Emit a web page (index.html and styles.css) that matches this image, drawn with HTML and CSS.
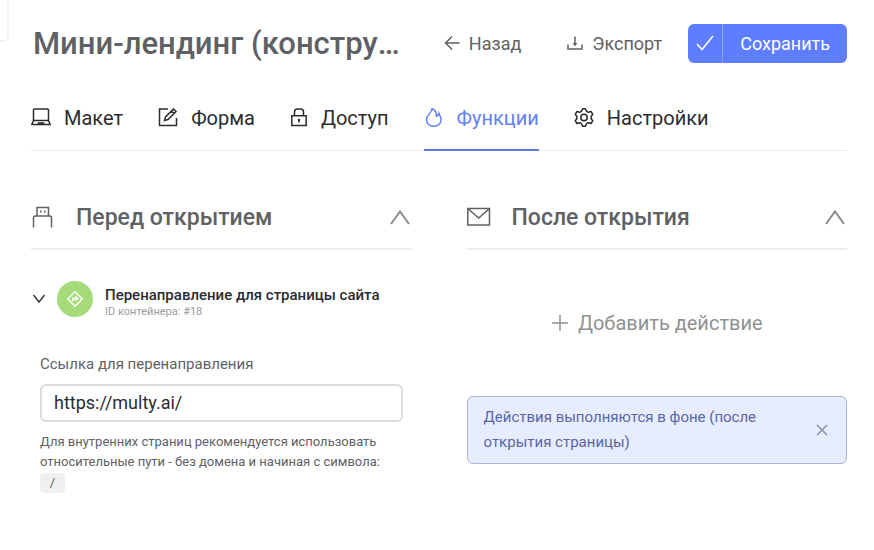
FILE: index.html
```html
<!DOCTYPE html>
<html lang="ru">
<head>
    <meta charset="UTF-8">
    <meta name="viewport" content="width=device-width, initial-scale=1">
    <title>Мини-лендинг (конструктор)</title>
    <link rel="stylesheet" href="styles.css">
</head>
<body>
    <div class="drawer-edge"></div>
    <main class="page">
        <header class="header">
            <h1>Мини-лендинг (конструктор)</h1>
            <div class="actions">
                <button type="button" class="btn-text">
                    <svg width="16" height="16" viewBox="0 0 16 16"><path d="M15.500 8H1.500M8 1.500L1.500 8L8 14.500"/></svg>
                    Назад
                </button>
                <button type="button" class="btn-text btn-export">
                    <svg width="16" height="16" viewBox="0 0 16 16"><path d="M1 9.500V14H15V9.500M8 1.500V10.500"/><path class="fill" d="M5.500 8H10.500L8 11Z"/></svg>
                    Экспорт
                </button>
                <button type="button" class="btn-save">
                    <span class="btn-save-icon">
                        <svg width="18" height="18" viewBox="0 0 18 18"><path d="M1 10L6 15.500L17 2"/></svg>
                    </span>
                    <span class="btn-save-text">Сохранить</span>
                </button>
            </div>
        </header>

        <nav class="tabs">
            <a href="#layout" class="tab">
                <svg width="20" height="20" viewBox="0 0 20 20"><path d="M2.500 12.500V1.800Q2.500 1 3.300 1H16.700Q17.500 1 17.500 1.800V12.500M2.500 12.500H17.500L19.200 16.500H0.800ZM7 16.500L7.500 15H12.500L13 16.500"/></svg>
                Макет
            </a>
            <a href="#form" class="tab">
                <svg width="20" height="20" viewBox="0 0 20 20"><path d="M10 1H1.500V17.500H18.500V10M6.500 12.500L7.500 9L15.500 1L18 3.500L10 11.500ZM13.500 3L16 5.500"/></svg>
                Форма
            </a>
            <a href="#access" class="tab">
                <svg width="18" height="20" viewBox="0 0 18 20"><path d="M1.800 7.800H16.200V17.500H1.800ZM4.500 7.800V4Q4.500 1 7.500 1H10.500Q13.500 1 13.500 4V7.800M9 11.500V14.500"/><circle class="fill" cx="9" cy="12" r="1.200"/></svg>
                Доступ
            </a>
            <a href="#functions" class="tab active">
                <svg width="20" height="20" viewBox="0 0 20 20"><path d="M8 0.500C8.200 4.500 2.500 6.800 2.500 11.500C2.500 15.500 5.500 18.200 9.700 18.200C14 18.200 17 15.500 17 11.500C17 9 15.700 7.600 15 5.500C14.700 7 13.700 7.800 12.500 8.300C12.700 4.800 11.200 2 8 0.500Z"/></svg>
                Функции
            </a>
            <a href="#settings" class="tab">
                <svg width="20" height="20" viewBox="0 0 20 20"><path d="M8.500 0.800H11.500L12.500 3.300L14.400 4.300L17 3.500L18.800 6.300L17.200 8.300V10.700L18.800 12.700L17 15.500L14.400 14.700L12.500 15.700L11.500 18.300H8.500L7.500 15.700L5.600 14.700L3 15.500L1.200 12.700L2.800 10.700V8.300L1.200 6.300L3 3.500L5.600 4.300L7.500 3.300Z" stroke-linejoin="round"/><circle cx="10" cy="9.500" r="3.200"/></svg>
                Настройки
            </a>
        </nav>

        <div class="columns">
            <section>
                <div class="section-head">
                    <svg width="24" height="24" viewBox="0 0 24 24"><path d="M2.500 21.500V12Q2.500 10 4.500 10H18.500Q20.500 10 20.500 12V21.500M6 10V1.500H17.500V10"/><path class="fill" d="M9 4.500H10.500V6.500H9ZM13 4.500H14.500V6.500H13Z"/></svg>
                    <h2>Перед открытием</h2>
                    <button type="button" class="toggle" aria-label="Свернуть">
                        <svg width="22" height="16" viewBox="0 0 22 16"><path d="M2 14L11 1.500L20 14"/></svg>
                    </button>
                </div>

                <div class="item">
                    <button type="button" class="item-toggle" aria-label="Развернуть">
                        <svg width="14" height="10" viewBox="0 0 14 10"><path d="M1.500 1L7 8L12.500 1"/></svg>
                    </button>
                    <span class="item-icon">
                        <svg width="18" height="18" viewBox="0 0 18 18"><path d="M9 1.800L16.200 9L9 16.200L1.800 9ZM7 11.500V8.500H11M9.500 6.500L11.500 8.500L9.500 10.500"/></svg>
                    </span>
                    <div>
                        <div class="item-title">Перенаправление для страницы сайта</div>
                        <div class="item-id">ID контейнера: #18</div>
                    </div>
                </div>

                <div class="field">
                    <label for="redirect">Ссылка для перенаправления</label>
                    <input type="text" id="redirect" value="https://multy.ai/">
                    <p class="hint">Для внутренних страниц рекомендуется использовать относительные пути - без домена и начиная с символа: <code>/</code></p>
                </div>
            </section>

            <section>
                <div class="section-head">
                    <svg width="24" height="24" viewBox="0 0 24 24"><path d="M0.800 2.500H22.500V19H0.800ZM1 2.700L11.700 12L22.300 2.700"/></svg>
                    <h2>После открытия</h2>
                    <button type="button" class="toggle" aria-label="Свернуть">
                        <svg width="22" height="16" viewBox="0 0 22 16"><path d="M2 14L11 1.500L20 14"/></svg>
                    </button>
                </div>

                <button type="button" class="btn-add">
                    <svg width="18" height="18" viewBox="0 0 18 18"><path d="M9 1V17M1 9H17"/></svg>
                    Добавить действие
                </button>

                <div class="notice">
                    <p>Действия выполняются в фоне (после открытия страницы)</p>
                    <button type="button" class="notice-close" aria-label="Закрыть">
                        <svg width="12" height="12" viewBox="0 0 12 12"><path d="M1 1L11 11M11 1L1 11"/></svg>
                    </button>
                </div>
            </section>
        </div>
    </main>
</body>
</html>
```
FILE: styles.css
```css
* {
    box-sizing: border-box;
}
body {
    margin: 0;
    font-family: Roboto, "Noto Sans", sans-serif;
    color: #2b2c30;
    background-color: #fff;
}
h1, h2, p {
    margin: 0;
}
button {
    padding: 0;
    border: 0;
    background: none;
    font-family: inherit;
    cursor: pointer;
}
svg {
    display: block;
    flex: none;
    fill: none;
    stroke: currentColor;
    stroke-width: 1.5;
}
svg .fill {
    fill: currentColor;
    stroke: none;
}
/* edge of the collapsed side panel */
.drawer-edge {
    position: absolute;
    top: -8px;
    left: -8px;
    width: 17px;
    height: 50px;
    border: 2px solid #f3f3f4;
    border-radius: 6px;
}
.page {
    padding: 19px 27px 40px 31px;
}

.header {
    display: flex;
    align-items: center;
    gap: 40px;
}
.header h1 {
    flex: 1;
    min-width: 0;
    padding-top: 2px;
    padding-left: 2px;
    font-size: 31px;
    line-height: 46px;
    font-weight: 500;
    color: #606164;
    white-space: nowrap;
    overflow: hidden;
    text-overflow: ellipsis;
}
.actions {
    display: flex;
    align-items: center;
}
.btn-text {
    display: flex;
    align-items: center;
    gap: 9px;
    margin-right: 46px;
    font-size: 18px;
    color: #606164;
}
.btn-export {
    margin-right: 26px;
}
.btn-save {
    display: flex;
    height: 39px;
    border-radius: 6px;
    background-color: #5e7eff;
    color: #fff;
    font-size: 18px;
}
.btn-save-icon {
    display: flex;
    align-items: center;
    height: 100%;
    padding: 0 8px;
    border-right: 1px solid #8ba2ff;
}
.btn-save-text {
    padding: 0 17px;
    line-height: 39px;
}

.tabs {
    display: flex;
    gap: 35px;
    margin-top: 19px;
    border-bottom: 1px solid #eaebee;
}
.tab {
    display: flex;
    align-items: center;
    gap: 13px;
    height: 65px;
    margin-bottom: -1px;
    border-bottom: 2px solid transparent;
    font-size: 20px;
    color: #2b2c30;
    text-decoration: none;
}
.tab.active {
    border-color: #6079db;
    color: #6381f3;
}

.columns {
    display: grid;
    grid-template-columns: 1fr 1fr;
    gap: 55px;
    margin-top: 34px;
}
.section-head {
    display: flex;
    align-items: center;
    height: 65px;
    padding-top: 2px;
    border-bottom: 2px solid #ededee;
    color: #606164;
}
.section-head h2 {
    flex: 1;
    padding-left: 21px;
    font-size: 23px;
    font-weight: 500;
}
.toggle {
    margin-right: 1px;
    color: #8b8c8f;
}
.toggle svg {
    stroke-width: 2;
}

.item {
    display: flex;
    align-items: center;
    margin-top: 30px;
}
.item-toggle {
    margin-right: 11px;
    margin-left: 1px;
    color: #3b3c40;
}
.item-icon {
    display: flex;
    align-items: center;
    justify-content: center;
    width: 36px;
    height: 36px;
    margin-right: 12px;
    border-radius: 50%;
    background-color: #a5db78;
    color: #fff;
}
.item-title {
    margin-top: 5px;
    font-size: 15px;
    line-height: 20px;
    font-weight: 500;
}
.item-id {
    font-size: 11px;
    line-height: 13px;
    color: #9a9b9e;
}

.field {
    padding: 0 9px;
    margin-top: 36px;
}
.field label {
    display: block;
    font-size: 15px;
    line-height: 20px;
    color: #606164;
}
.field input {
    width: 100%;
    height: 38px;
    margin-top: 10px;
    padding: 0 12px 1px;
    border: 2px solid #dcdcde;
    border-radius: 6px;
    font-family: inherit;
    font-size: 18px;
    color: #2b2c30;
}
.hint {
    margin-top: 10px;
    font-size: 13px;
    line-height: 20px;
    color: #606164;
}
.hint code {
    display: block;
    width: 25px;
    margin-top: 1px;
    border-radius: 4px;
    background-color: #f0f0f1;
    font-family: inherit;
    text-align: center;
}

.btn-add {
    display: flex;
    align-items: center;
    gap: 9px;
    margin: 60px auto 0;
    font-size: 20px;
    line-height: 26px;
    color: #919193;
}
.notice {
    display: flex;
    align-items: center;
    justify-content: space-between;
    gap: 30px;
    margin-top: 60px;
    padding: 8px 18px 8px 16px;
    border: 1px solid #aab6d6;
    border-radius: 6px;
    background-color: #e7ecfe;
    color: #5967a5;
    font-size: 15px;
    line-height: 25px;
}
.notice-close {
    color: #8b90a5;
}
```
